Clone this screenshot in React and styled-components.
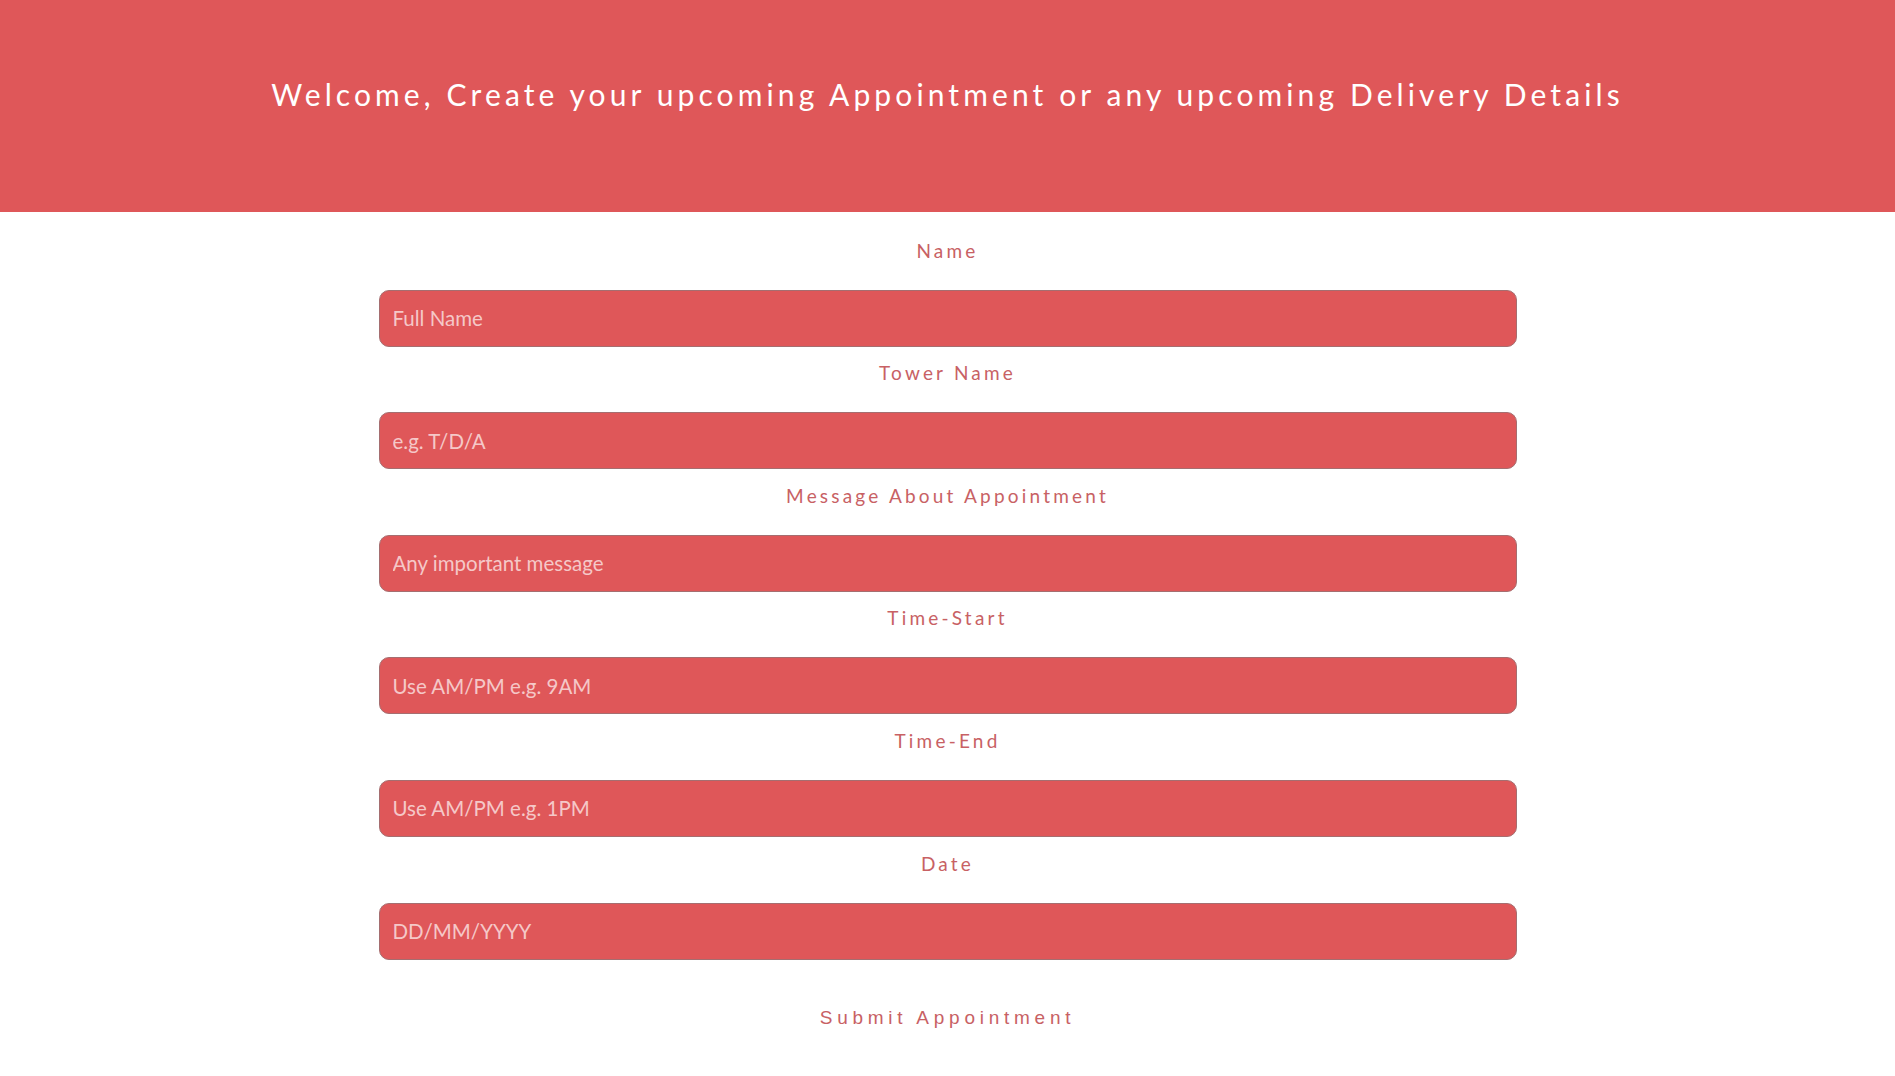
import React from "react";
import styled, { createGlobalStyle } from "styled-components";

const Global = createGlobalStyle`
  html, body { margin: 0; padding: 0; background: #ffffff; }
  body { font-family: "Lato", "Open Sans", sans-serif; }
  * { box-sizing: border-box; }
`;

const Header = styled.header`
  height: 212px;
  background: #df5759;
  display: flex;
  justify-content: center;
  padding-top: 76px;
`;

const Title = styled.h1`
  margin: 0;
  font-family: "Lato", sans-serif;
  font-weight: 400;
  font-size: 30px;
  line-height: 36px;
  letter-spacing: 4.1px;
  color: #ffffff;
  white-space: nowrap;
`;

const Form = styled.form`
  width: 1138px;
  margin: 0 auto;
  padding-top: 12px;
  display: flex;
  flex-direction: column;
  align-items: stretch;
`;

const Label = styled.label`
  display: block;
  text-align: center;
  margin: 14.6px 0 27px;
  font-family: "Lato", sans-serif;
  font-size: 19px;
  line-height: 24px;
  letter-spacing: 3.2px;
  color: #c86164;
`;

const Input = styled.input`
  display: block;
  width: 100%;
  height: 57px;
  border: 1px solid #a56e70;
  border-radius: 10px;
  background: #df5759;
  padding: 0 13px;
  font-family: "Lato", sans-serif;
  font-size: 20.5px;
  color: #ffffff;
  outline: none;
  &::placeholder {
    color: #f5c8c8;
    opacity: 1;
  }
`;

const Submit = styled.button`
  align-self: center;
  margin-top: 46px;
  border: none;
  background: transparent;
  font-family: "Liberation Sans", Arial, sans-serif;
  font-size: 19px;
  line-height: 24px;
  letter-spacing: 4.75px;
  color: #c86164;
  cursor: pointer;
  padding: 0;
`;

const fields = [
  { label: "Name", placeholder: "Full Name" },
  { label: "Tower Name", placeholder: "e.g. T/D/A" },
  { label: "Message About Appointment", placeholder: "Any important message" },
  { label: "Time-Start", placeholder: "Use AM/PM e.g. 9AM" },
  { label: "Time-End", placeholder: "Use AM/PM e.g. 1PM" },
  { label: "Date", placeholder: "DD/MM/YYYY" },
];

export default function App() {
  return (
    <>
      <Global />
      <Header>
        <Title>Welcome, Create your upcoming Appointment or any upcoming Delivery Details</Title>
      </Header>
      <Form onSubmit={(e) => e.preventDefault()}>
        {fields.map((f) => (
          <React.Fragment key={f.label}>
            <Label>{f.label}</Label>
            <Input type="text" placeholder={f.placeholder} />
          </React.Fragment>
        ))}
        <Submit type="submit">Submit Appointment</Submit>
      </Form>
    </>
  );
}
